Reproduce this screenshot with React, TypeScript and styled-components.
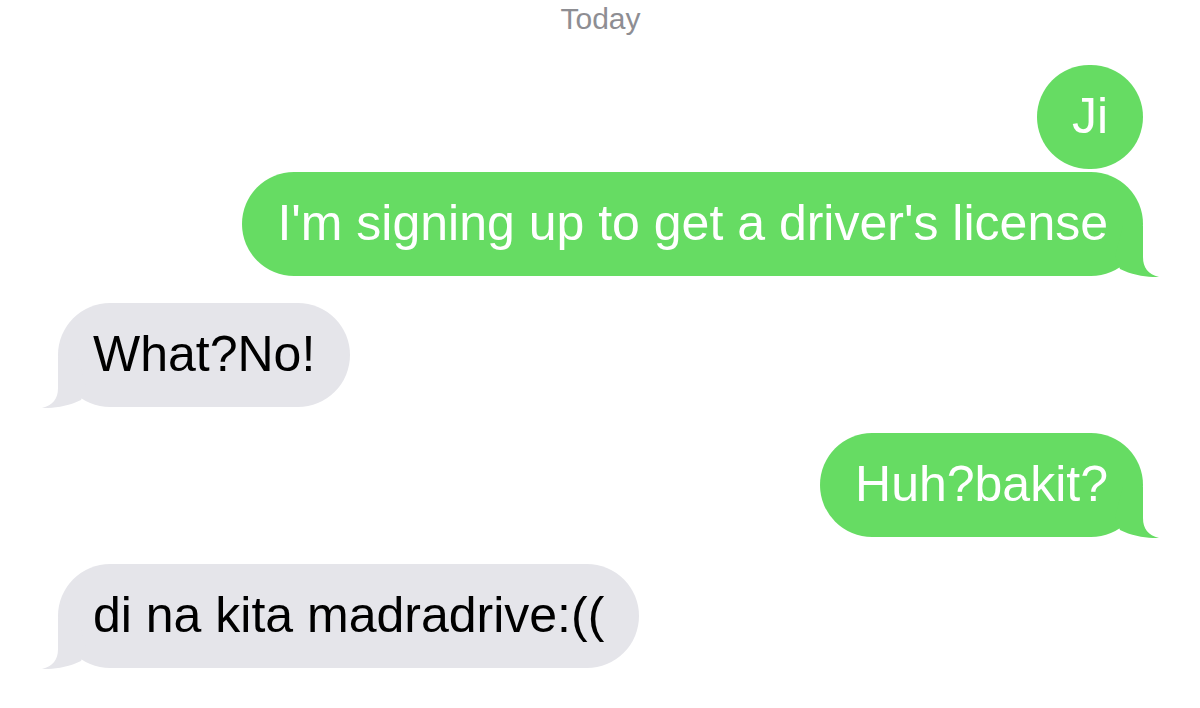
import React from "react";
import styled, { createGlobalStyle } from "styled-components";

const GlobalStyle = createGlobalStyle`
  html, body {
    margin: 0;
    padding: 0;
    background: #ffffff;
  }
  body {
    font-family: "Liberation Sans", Arial, Helvetica, sans-serif;
    -webkit-font-smoothing: antialiased;
  }
`;

type Side = "me" | "them";

const GREEN = "#66dc63";
const GRAY = "#e5e5ea";

const Thread = styled.main`
  width: 1200px;
  height: 708px;
  box-sizing: border-box;
  padding: 0 57px 0 58px;
  display: flex;
  flex-direction: column;
  overflow: hidden;
`;

const DayLabel = styled.div`
  height: 38px;
  line-height: 38px;
  font-size: 30px;
  color: #8e8e93;
  text-align: center;
  margin-bottom: 27px;
`;

const Group = styled.section<{ $side: Side }>`
  display: flex;
  flex-direction: column;
  gap: 3px;
  align-items: ${(p) => (p.$side === "me" ? "flex-end" : "flex-start")};
  & + & {
    margin-top: 26.5px;
  }
`;

const Bubble = styled.div<{ $side: Side }>`
  position: relative;
  box-sizing: border-box;
  height: 104px;
  min-width: 104px;
  padding: 0 35px;
  border-radius: 52px;
  display: flex;
  align-items: center;
  justify-content: center;
  font-size: 50px;
  line-height: 1.15;
  white-space: nowrap;
  background: ${(p) => (p.$side === "me" ? GREEN : GRAY)};
  color: ${(p) => (p.$side === "me" ? "#ffffff" : "#000000")};
`;

const TailSvg = styled.svg<{ $side: Side }>`
  position: absolute;
  bottom: -1px;
  width: 47px;
  height: 51px;
  ${(p) =>
    p.$side === "me"
      ? "right: -17px;"
      : "left: -17px; transform: scaleX(-1);"}
`;

const Text = styled.span`
  position: relative;
  z-index: 1;
`;

function Tail({ side }: { side: Side }) {
  return (
    <TailSvg $side={side} viewBox="20 0 47 51" aria-hidden="true">
      <path
        d="M30,0 L50,0 L50,31 C50,42 55,48 66,51 C56,51.5 40,49.5 27,43 L22,30 Z"
        fill={side === "me" ? GREEN : GRAY}
      />
    </TailSvg>
  );
}

type Msg = { text: string; tail?: boolean };

const groups: { side: Side; msgs: Msg[] }[] = [
  {
    side: "me",
    msgs: [
      { text: "Ji" },
      { text: "I'm signing up to get a driver's license", tail: true },
    ],
  },
  { side: "them", msgs: [{ text: "What?No!", tail: true }] },
  { side: "me", msgs: [{ text: "Huh?bakit?", tail: true }] },
  { side: "them", msgs: [{ text: "di na kita madradrive:((", tail: true }] },
];

export default function App() {
  return (
    <>
      <GlobalStyle />
      <Thread>
        <DayLabel>Today</DayLabel>
        {groups.map((g, gi) => (
          <Group key={gi} $side={g.side}>
            {g.msgs.map((m, mi) => (
              <Bubble key={mi} $side={g.side}>
                {m.tail && <Tail side={g.side} />}
                <Text>{m.text}</Text>
              </Bubble>
            ))}
          </Group>
        ))}
      </Thread>
    </>
  );
}
